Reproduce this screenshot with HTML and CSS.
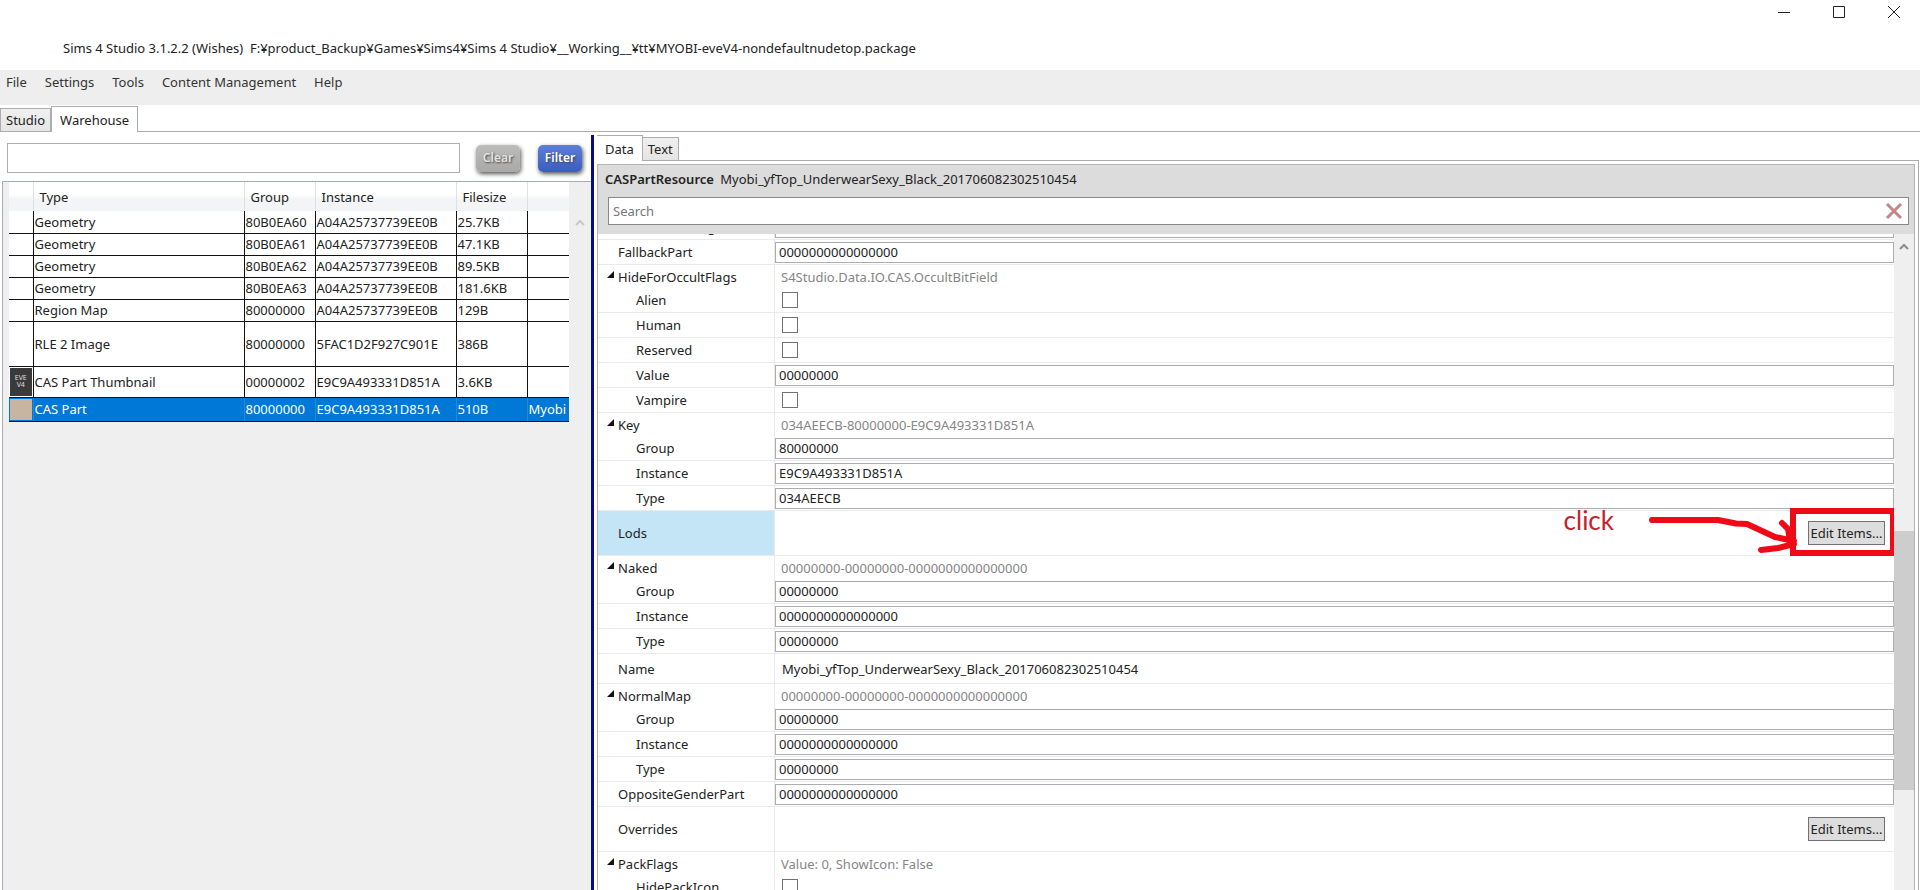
FILE: index.html
```html
<!DOCTYPE html>
<html lang="en">
<head>
    <meta charset="UTF-8">
    <meta name="viewport" content="width=device-width, initial-scale=1.0">
    <title>Sims 4 Studio</title>
    <link rel="stylesheet" href="styles.css">
</head>
<body>
    <header class="titlebar">
        <div class="window-buttons">
            <button type="button" aria-label="Minimize">
                <svg width="14" height="14" viewBox="0 0 14 14"><path d="M1 7.5h12"/></svg>
            </button>
            <button type="button" aria-label="Maximize">
                <svg width="14" height="14" viewBox="0 0 14 14"><path d="M1.5 1.5h11v11h-11z"/></svg>
            </button>
            <button type="button" aria-label="Close">
                <svg width="14" height="14" viewBox="0 0 14 14"><path d="M1 1l12 12M13 1L1 13"/></svg>
            </button>
        </div>
        <h1>Sims 4 Studio 3.1.2.2 (Wishes)&nbsp; F:¥product_Backup¥Games¥Sims4¥Sims 4 Studio¥__Working__¥tt¥MYOBI-eveV4-nondefaultnudetop.package</h1>
    </header>

    <nav class="menu">
        <a href="#">File</a>
        <a href="#">Settings</a>
        <a href="#">Tools</a>
        <a href="#">Content Management</a>
        <a href="#">Help</a>
    </nav>

    <div class="tabs main-tabs">
        <button type="button" class="tab">Studio</button>
        <button type="button" class="tab active">Warehouse</button>
    </div>

    <main class="workspace">
        <section class="resources">
            <form class="filter-bar">
                <input type="text" aria-label="Filter text">
                <button type="button" class="clear">Clear</button>
                <button type="button" class="filter">Filter</button>
            </form>
            <div class="resource-list">
                <table>
                    <colgroup>
                        <col class="col-thumb">
                        <col class="col-type">
                        <col class="col-group">
                        <col class="col-instance">
                        <col class="col-size">
                        <col class="col-name">
                    </colgroup>
                    <thead>
                        <tr><th></th><th>Type</th><th>Group</th><th>Instance</th><th>Filesize</th><th></th></tr>
                    </thead>
                    <tbody>
                        <tr><td></td><td>Geometry</td><td>80B0EA60</td><td>A04A25737739EE0B</td><td>25.7KB</td><td></td></tr>
                        <tr><td></td><td>Geometry</td><td>80B0EA61</td><td>A04A25737739EE0B</td><td>47.1KB</td><td></td></tr>
                        <tr><td></td><td>Geometry</td><td>80B0EA62</td><td>A04A25737739EE0B</td><td>89.5KB</td><td></td></tr>
                        <tr><td></td><td>Geometry</td><td>80B0EA63</td><td>A04A25737739EE0B</td><td>181.6KB</td><td></td></tr>
                        <tr><td></td><td>Region Map</td><td>80000000</td><td>A04A25737739EE0B</td><td>129B</td><td></td></tr>
                        <tr class="image-row"><td></td><td>RLE 2 Image</td><td>80000000</td><td>5FAC1D2F927C901E</td><td>386B</td><td></td></tr>
                        <tr class="thumb-row"><td><div class="thumb">EVE<br>V4</div></td><td>CAS Part Thumbnail</td><td>00000002</td><td>E9C9A493331D851A</td><td>3.6KB</td><td></td></tr>
                        <tr class="selected"><td><div class="swatch"></div></td><td>CAS Part</td><td>80000000</td><td>E9C9A493331D851A</td><td>510B</td><td>Myobi</td></tr>
                    </tbody>
                </table>
                <svg class="list-up" width="10" height="7" viewBox="0 0 10 7"><path d="M1 6l4-4 4 4"/></svg>
            </div>
        </section>

        <div class="splitter"></div>

        <section class="details">
            <div class="tabs detail-tabs">
                <button type="button" class="tab active">Data</button>
                <button type="button" class="tab">Text</button>
            </div>
            <div class="detail-page">
                <div class="inspector">
                    <div class="inspector-head">
                        <h2><b>CASPartResource</b> Myobi_yfTop_UnderwearSexy_Black_201706082302510454</h2>
                        <div class="search">
                            <input type="text" placeholder="Search" aria-label="Search">
                            <button type="button" aria-label="Clear search">
                                <svg width="18" height="18" viewBox="0 0 18 18"><path class="x-shade" d="M2 2l14 14M16 2L2 16"/><path class="x-mark" d="M2 2l14 14M16 2L2 16"/></svg>
                            </button>
                        </div>
                    </div>
                    <div class="inspector-body">
                        <div class="properties">
                            <div class="row first"><label for="exclude">ExcludePartFlags</label><div class="value"><input type="text" id="exclude" value="0000000000000000"></div></div>
                            <div class="row"><label for="fallback">FallbackPart</label><div class="value"><input type="text" id="fallback" value="0000000000000000"></div></div>

                            <div class="row group"><span class="name">HideForOccultFlags</span><div class="value">S4Studio.Data.IO.CAS.OccultBitField</div></div>
                            <div class="row child"><label for="alien">Alien</label><div class="value"><input type="checkbox" id="alien"></div></div>
                            <div class="row child"><label for="human">Human</label><div class="value"><input type="checkbox" id="human"></div></div>
                            <div class="row child"><label for="reserved">Reserved</label><div class="value"><input type="checkbox" id="reserved"></div></div>
                            <div class="row child"><label for="occult-value">Value</label><div class="value"><input type="text" id="occult-value" value="00000000"></div></div>
                            <div class="row child"><label for="vampire">Vampire</label><div class="value"><input type="checkbox" id="vampire"></div></div>

                            <div class="row group"><span class="name">Key</span><div class="value">034AEECB-80000000-E9C9A493331D851A</div></div>
                            <div class="row child"><label for="key-group">Group</label><div class="value"><input type="text" id="key-group" value="80000000"></div></div>
                            <div class="row child"><label for="key-instance">Instance</label><div class="value"><input type="text" id="key-instance" value="E9C9A493331D851A"></div></div>
                            <div class="row child"><label for="key-type">Type</label><div class="value"><input type="text" id="key-type" value="034AEECB"></div></div>

                            <div class="row tall current">
                                <span class="name">Lods</span>
                                <div class="value"><button type="button" class="edit">Edit Items...</button></div>
                                <div class="note">
                                    <span>click</span>
                                    <svg width="154" height="48" viewBox="0 0 154 48">
                                        <path d="M4 12H70L88 15.500L99 16L127 29L146 33M134 15L140 21L142 32M113 42L130 40L146 36"/>
                                    </svg>
                                    <div class="frame"></div>
                                </div>
                            </div>

                            <div class="row group"><span class="name">Naked</span><div class="value">00000000-00000000-0000000000000000</div></div>
                            <div class="row child"><label for="naked-group">Group</label><div class="value"><input type="text" id="naked-group" value="00000000"></div></div>
                            <div class="row child"><label for="naked-instance">Instance</label><div class="value"><input type="text" id="naked-instance" value="0000000000000000"></div></div>
                            <div class="row child"><label for="naked-type">Type</label><div class="value"><input type="text" id="naked-type" value="00000000"></div></div>

                            <div class="row medium"><label for="name">Name</label><div class="value"><input type="text" class="plain" id="name" value="Myobi_yfTop_UnderwearSexy_Black_201706082302510454"></div></div>

                            <div class="row group"><span class="name">NormalMap</span><div class="value">00000000-00000000-0000000000000000</div></div>
                            <div class="row child"><label for="normal-group">Group</label><div class="value"><input type="text" id="normal-group" value="00000000"></div></div>
                            <div class="row child"><label for="normal-instance">Instance</label><div class="value"><input type="text" id="normal-instance" value="0000000000000000"></div></div>
                            <div class="row child"><label for="normal-type">Type</label><div class="value"><input type="text" id="normal-type" value="00000000"></div></div>

                            <div class="row"><label for="opposite">OppositeGenderPart</label><div class="value"><input type="text" id="opposite" value="0000000000000000"></div></div>
                            <div class="row tall"><span class="name">Overrides</span><div class="value"><button type="button" class="edit">Edit Items...</button></div></div>

                            <div class="row group"><span class="name">PackFlags</span><div class="value">Value: 0, ShowIcon: False</div></div>
                            <div class="row child"><label for="hide-icon">HidePackIcon</label><div class="value"><input type="checkbox" id="hide-icon"></div></div>
                        </div>
                        <div class="scrollbar">
                            <svg width="10" height="7" viewBox="0 0 10 7"><path d="M1 6l4-4 4 4"/></svg>
                            <div class="thumb-bar"></div>
                        </div>
                    </div>
                </div>
            </div>
        </section>
    </main>
</body>
</html>
```
FILE: styles.css
```css
* {
    box-sizing: border-box;
}

body {
    margin: 0;
    height: 100vh;
    display: flex;
    flex-direction: column;
    overflow: hidden;
    background: #fff;
    color: #222;
    font-family: 'Noto Sans', 'Open Sans', sans-serif;
    font-size: 13px;
    line-height: 20px;
}

button, input {
    font: inherit;
    color: inherit;
    margin: 0;
    padding: 0;
    border: 0;
    background: none;
}

h1, h2 {
    margin: 0;
    font-size: 13px;
    font-weight: normal;
}

/* title bar and menu */
.titlebar {
    flex: none;
    height: 70px;
}

.window-buttons {
    display: flex;
    justify-content: flex-end;
    gap: 3px;
    height: 38px;
}

.window-buttons button {
    width: 52px;
    height: 24px;
    display: flex;
    align-items: center;
    justify-content: center;
}

.window-buttons svg {
    fill: none;
    stroke: #222;
}

.titlebar h1 {
    padding-left: 63px;
}

.menu {
    flex: none;
    height: 35px;
    display: flex;
    gap: 18px;
    padding: 2px 6px;
    background: #eee;
}

.menu a {
    color: #333;
    text-decoration: none;
}

/* tabs */
.tabs {
    flex: none;
    display: flex;
    align-items: flex-end;
    border-bottom: 1px solid #acacac;
}

.main-tabs {
    height: 27px;
}

.detail-tabs {
    height: 26px;
}

.tab {
    height: 23px;
    padding: 0 5px;
    border: 1px solid #acacac;
    border-bottom: 0;
    background: linear-gradient(#f0f0f0, #e5e5e5);
}

.tab.active {
    height: 26px;
    margin-bottom: -1px;
    padding: 0 8px;
    background: #fff;
}

.tab + .tab {
    border-left: 0;
}

.main-tabs .tab + .tab {
    border-left: 1px solid #acacac;
}

.detail-tabs .tab.active {
    border-left: 0;
}

/* resource list */
.workspace {
    flex: 1;
    min-height: 0;
    display: flex;
    padding-top: 3px;
}

.resources {
    flex: 0 0 591px;
    min-width: 0;
    display: flex;
    flex-direction: column;
}

.filter-bar {
    display: flex;
    align-items: center;
    height: 46px;
    padding: 0 9px 0 7px;
}

.filter-bar input {
    flex: 1;
    height: 30px;
    margin-right: 16px;
    padding: 0 4px;
    border: 1px solid #abadb3;
}

.filter-bar button {
    width: 44px;
    height: 27px;
    border-radius: 5px;
    color: #fff;
    font-size: 12px;
    font-weight: 600;
    text-shadow: 1px 1px 2px #444;
    box-shadow: 1px 2px 4px #555;
}

.filter-bar .clear {
    margin-right: 18px;
    background: linear-gradient(#bcbcba, #a9a9a7);
    color: #e4e4e4;
}

.filter-bar .filter {
    background: linear-gradient(#5c7fd9, #3c5cbf);
}

.resource-list {
    flex: 1;
    position: relative;
    padding-left: 6px;
    border: 1px solid #a5acb5;
    border-width: 1px 0 0 1px;
    margin-left: 2px;
    background: #efefef;
}

.list-up {
    position: absolute;
    top: 37px;
    right: 6px;
    fill: none;
    stroke: #c8c8c8;
    stroke-width: 2;
}

table {
    width: 560px;
    table-layout: fixed;
    border-collapse: collapse;
}

.col-thumb {
    width: 24px;
}

.col-type {
    width: 211px;
}

.col-group {
    width: 71px;
}

.col-instance {
    width: 141px;
}

.col-size {
    width: 71px;
}

th {
    height: 29px;
    padding: 0 6px;
    border-right: 1px solid #dfe0e1;
    background: linear-gradient(#fff 40%, #f3f4f5 60%);
    font-size: 13px;
    font-weight: normal;
    text-align: left;
}

th:last-child {
    border-right: 0;
}

td {
    height: 22px;
    padding: 0 1px;
    border: 1px solid #111;
    border-width: 0 1px 1px 0;
    background: #fff;
    overflow: hidden;
    white-space: nowrap;
}

td:last-child {
    border-right: 0;
}

.image-row td {
    height: 45px;
}

.thumb-row td {
    height: 31px;
}

.selected td {
    height: 24px;
    background: #0078d7;
    border-right-color: #2b87d3;
    color: #fff;
}

.thumb {
    height: 28px;
    padding-top: 6px;
    background: #3a3a3a;
    color: #ddd;
    font-size: 7px;
    line-height: 7px;
    text-align: center;
}

.swatch {
    height: 21px;
    background: #c9b3a1;
}

.splitter {
    flex: 0 0 3px;
    background: #0a0a82;
}

/* details */
.details {
    flex: 1;
    min-width: 0;
    display: flex;
    flex-direction: column;
    padding: 0 1px 0 3px;
}

.detail-page {
    flex: 1;
    min-height: 0;
    display: flex;
    padding: 3px 3px 0 0;
    border-right: 1px solid #acacac;
}

.inspector {
    flex: 1;
    min-width: 0;
    display: flex;
    flex-direction: column;
    border: 1px solid #b4b4b4;
    border-bottom: 0;
}

.inspector-head {
    flex: none;
    height: 69px;
    padding: 4px 5px 0 7px;
    background: #dcdcdc;
}

.inspector-head b {
    margin-right: 3px;
    font-weight: 600;
}

.search {
    display: flex;
    align-items: center;
    height: 28px;
    margin: 8px 0 0 3px;
    border: 1px solid #888;
    background: #fff;
}

.search input {
    flex: 1;
    padding: 0 4px;
}

.search input::placeholder {
    color: #777;
}

.search button {
    display: flex;
    padding: 0 5px;
}

.search svg {
    fill: none;
}

.x-shade {
    stroke: #b98a8c;
    stroke-width: 3;
}

.x-mark {
    stroke: #e07a7c;
    stroke-width: 1;
}

.inspector-body {
    flex: 1;
    min-height: 0;
    display: flex;
}

.properties {
    flex: 1;
    min-width: 0;
    overflow: hidden;
}

.row {
    position: relative;
    display: grid;
    grid-template-columns: 177px 1fr;
    height: 25px;
    border-bottom: 1px solid #eaeaea;
}

.row.first {
    margin-top: -19px;
}

.row.group {
    height: 23px;
    border-bottom: 0;
}

.row.medium {
    height: 30px;
}

.row.tall {
    height: 45px;
}

.row label,
.row .name {
    display: flex;
    align-items: center;
    padding-left: 20px;
    border-right: 1px solid #eaeaea;
}

.row.child label {
    padding-left: 38px;
}

.group .name::before {
    content: '';
    width: 7px;
    height: 7px;
    margin: 0 4px 4px -11px;
    background: #111;
    clip-path: polygon(100% 0, 100% 100%, 0 100%);
}

.current .name {
    background: #c4e5f6;
}

.value {
    display: flex;
    align-items: center;
    min-width: 0;
}

.group .value {
    padding-left: 6px;
    color: #858585;
}

.value input[type="text"] {
    width: 100%;
    height: 21px;
    padding: 0 3px;
    border: 1px solid #abadb3;
}

.value input.plain {
    padding-left: 7px;
    border: 0;
}

.value input[type="checkbox"] {
    appearance: none;
    width: 16px;
    height: 16px;
    margin-left: 7px;
    border: 1px solid #707070;
    background: #fff;
}

.edit {
    width: 77px;
    height: 24px;
    margin: 0 9px 0 auto;
    border: 1px solid #707070;
    background: #ddd;
}

.scrollbar {
    flex: 0 0 20px;
    display: flex;
    flex-direction: column;
    align-items: center;
    padding-top: 9px;
    background: #efefef;
}

.scrollbar svg {
    flex: none;
    fill: none;
    stroke: #8a8a8a;
    stroke-width: 2;
}

.thumb-bar {
    width: 100%;
    height: 40%;
    margin-top: 281px;
    background: #cdcdcd;
}

/* red marker notes over the Lods row */
.note {
    position: absolute;
    top: -3px;
    right: -2px;
    display: flex;
    color: #c8202c;
    font-family: Lato, sans-serif;
    font-size: 26px;
    line-height: 24px;
    pointer-events: none;
}

.note svg {
    margin: 0 -12px 0 34px;
    fill: none;
    stroke: #ee0a16;
    stroke-width: 6;
    stroke-linecap: round;
    stroke-linejoin: round;
}

.frame {
    width: 106px;
    height: 48px;
    border: 6px solid #ee0a16;
}
```
